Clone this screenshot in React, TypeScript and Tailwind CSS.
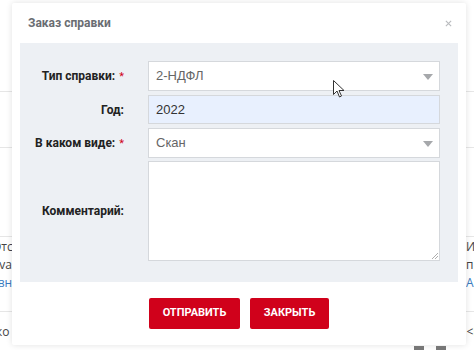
import React from 'react';

const labelCls = "w-[104px] shrink-0 text-right text-[12px] font-bold text-[#222] [font-family:Roboto,sans-serif]";

const Req = () => <span className="ml-[4px] text-[11px] font-normal text-[#d0021b]">*</span>;

const Caret = () => (
  <svg className="absolute right-[6px] top-[12px] w-[10px] h-[6px]" viewBox="0 0 10 6">
    <path d="M0 0h10L5 6z" fill="#a6a8ab" />
  </svg>
);

const App: React.FC = () => {
  return (
    <div className="relative w-[474px] h-[350px] overflow-hidden bg-white [font-family:'Liberation_Sans',Arial,sans-serif]">
      {/* page behind the modal */}
      <div className="flex flex-col text-[12px] text-[#444] [font-family:'Open_Sans',sans-serif]">
        <div className="h-[92px] border-b border-[#e6e6e6]" />
        <div className="h-[56px] border-b border-[#e6e6e6]" />
        <div className="h-[89px] border-b border-[#e6e6e6]" />
        <div className="h-[75px] flex justify-between pt-[1px] leading-[18px] border-b border-[#e6e6e6]">
          <div className="-ml-[8px]">
            <div>Отс</div>
            <div>ova</div>
            <div className="text-[#3a7bbf]">твн</div>
          </div>
          <div className="mr-[-12px] text-left w-[20px]">
            <div>Ип</div>
            <div>пр</div>
            <div className="text-[#3a7bbf]">Ар</div>
          </div>
        </div>
        <div className="h-[38px] flex justify-between items-center pt-[2px]">
          <span className="-ml-[4px]">ко</span>
          <span className="-mr-[6px]">&lt;Е</span>
        </div>
      </div>

      {/* modal */}
      <div className="absolute left-[12px] top-[3px] w-[454px] h-[342px] bg-white rounded-[2px] shadow-[0_0_6px_rgba(0,0,0,0.12)] flex flex-col">
        <div className="h-[40px] flex items-center justify-between pl-[16px] pr-[14px]">
          <span className="text-[12px] font-bold text-[#6a6d72] [font-family:Roboto,sans-serif]">Заказ справки</span>
          <svg className="w-[7px] h-[7px]" viewBox="0 0 8 8">
            <path d="M1 1l6 6M7 1l-6 6" stroke="#b9bbbe" strokeWidth="1.3" />
          </svg>
        </div>

        <div className="mx-[8px] bg-[#edf0f4] pt-[18px] pb-[21px] pr-[18px] flex flex-col">
          <div className="flex items-center h-[30px]">
            <div className={labelCls}>Тип справки:<Req /></div>
            <div className="ml-[24px] relative flex-1 h-full bg-white border border-[#d5d8dc] flex items-center pl-[7px] text-[13px] text-[#666]">
              2-НДФЛ
              <Caret />
            </div>
          </div>
          <div className="flex items-center h-[29px] mt-[4px]">
            <div className={labelCls}>Год:</div>
            <div className="ml-[24px] flex-1 h-full bg-[#e8f0fe] border border-[#d5d8dc] flex items-center pl-[7px] text-[13px] text-[#333]">
              2022
            </div>
          </div>
          <div className="flex items-center h-[30px] mt-[4px]">
            <div className={labelCls}>В каком виде:<Req /></div>
            <div className="ml-[24px] relative flex-1 h-full bg-white border border-[#d5d8dc] flex items-center pl-[7px] text-[13px] text-[#666]">
              Скан
              <Caret />
            </div>
          </div>
          <div className="flex items-center h-[100px] mt-[3px]">
            <div className={labelCls}>Комментарий:</div>
            <div className="ml-[24px] relative flex-1 h-full bg-white border border-[#d5d8dc]">
              <svg className="absolute right-[1px] bottom-[1px] w-[7px] h-[7px]" viewBox="0 0 7 7">
                <path d="M7 1L1 7M7 4L4 7" stroke="#999" strokeWidth="0.8" />
              </svg>
            </div>
          </div>
        </div>

        <div className="flex justify-center gap-[10px] mt-[16px] [font-family:Roboto,sans-serif]">
          <button className="w-[91px] h-[31px] bg-[#d0011b] text-white text-[11px] font-bold rounded-[2px]">ОТПРАВИТЬ</button>
          <button className="w-[79px] h-[31px] bg-[#d0011b] text-white text-[11px] font-bold rounded-[2px]">ЗАКРЫТЬ</button>
        </div>
      </div>

      {/* mouse pointer */}
      <svg className="absolute left-[333px] top-[80px] w-[12px] h-[18px]" viewBox="0 0 12 18">
        <path d="M0.5 0.5v14l3.5-3.5 2.5 6 2-1-2.5-5.5h5z" fill="white" stroke="#333" strokeWidth="1" strokeLinejoin="round" />
      </svg>

      {/* bottom scraps */}
      <div className="absolute left-[414px] top-[346px] w-[10px] h-[6px] bg-[#777]" />
      <div className="absolute left-[436px] top-[346px] w-[10px] h-[6px] bg-[#777]" />
    </div>
  );
};

export default App;
